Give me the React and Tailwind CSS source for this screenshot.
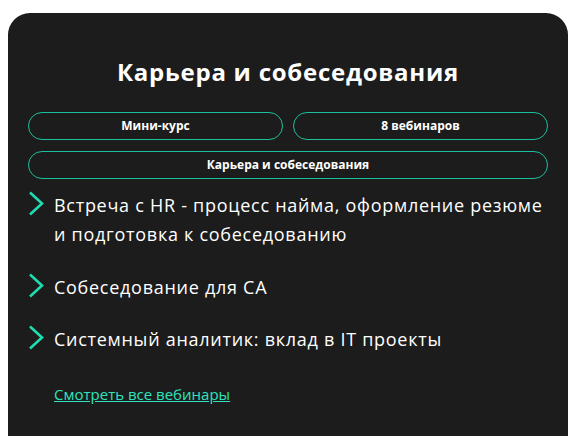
import React from 'react';

const items = [
  'Встреча с HR - процесс найма, оформление резюме и подготовка к собеседованию',
  'Собеседование для СА',
  'Системный аналитик: вклад в IT проекты',
];

function Chevron() {
  return (
    <svg width="16" height="25" viewBox="0 0 16 25" fill="none" className="shrink-0">
      <polyline points="2,1.5 14,12.5 2,23.5" stroke="#1fdcb1" strokeWidth="2.6" strokeLinejoin="miter" />
    </svg>
  );
}

function Pill({ children, wide }) {
  return (
    <div
      className={`h-[28px] rounded-full border border-[#1bbf9b] flex items-center justify-center text-[12px] font-bold text-white ${wide ? 'col-span-2' : ''}`}
    >
      {children}
    </div>
  );
}

export default function App() {
  return (
    <div className="w-[581px] h-[436px] bg-white pt-[13px] pl-[8px] overflow-hidden" style={{ fontFamily: '"Open Sans", sans-serif' }}>
      <div className="w-[560px] h-[423px] bg-[#1c1c1c] rounded-t-[22px] px-[20px] pt-[43px]">
        <h1 className="text-[24px] leading-[32px] font-bold text-white text-center tracking-[0.75px]">Карьера и собеседования</h1>

        <div className="grid grid-cols-2 gap-x-[10px] gap-y-[11px] mt-[24px]">
          <Pill>Мини-курс</Pill>
          <Pill>8 вебинаров</Pill>
          <Pill wide>Карьера и собеседования</Pill>
        </div>

        <ul className="mt-[12px] flex flex-col gap-[23.5px]">
          {items.map(t => (
            <li key={t} className="flex items-start gap-[10px]">
              <Chevron />
              <span className="text-[18px] leading-[29px] text-white tracking-[0.72px]">{t}</span>
            </li>
          ))}
        </ul>

        <a href="#" className="block mt-[30px] ml-[26px] text-[15px] leading-[20px] text-[#2ee3bd] underline">
          Смотреть все вебинары
        </a>
      </div>
    </div>
  );
}
